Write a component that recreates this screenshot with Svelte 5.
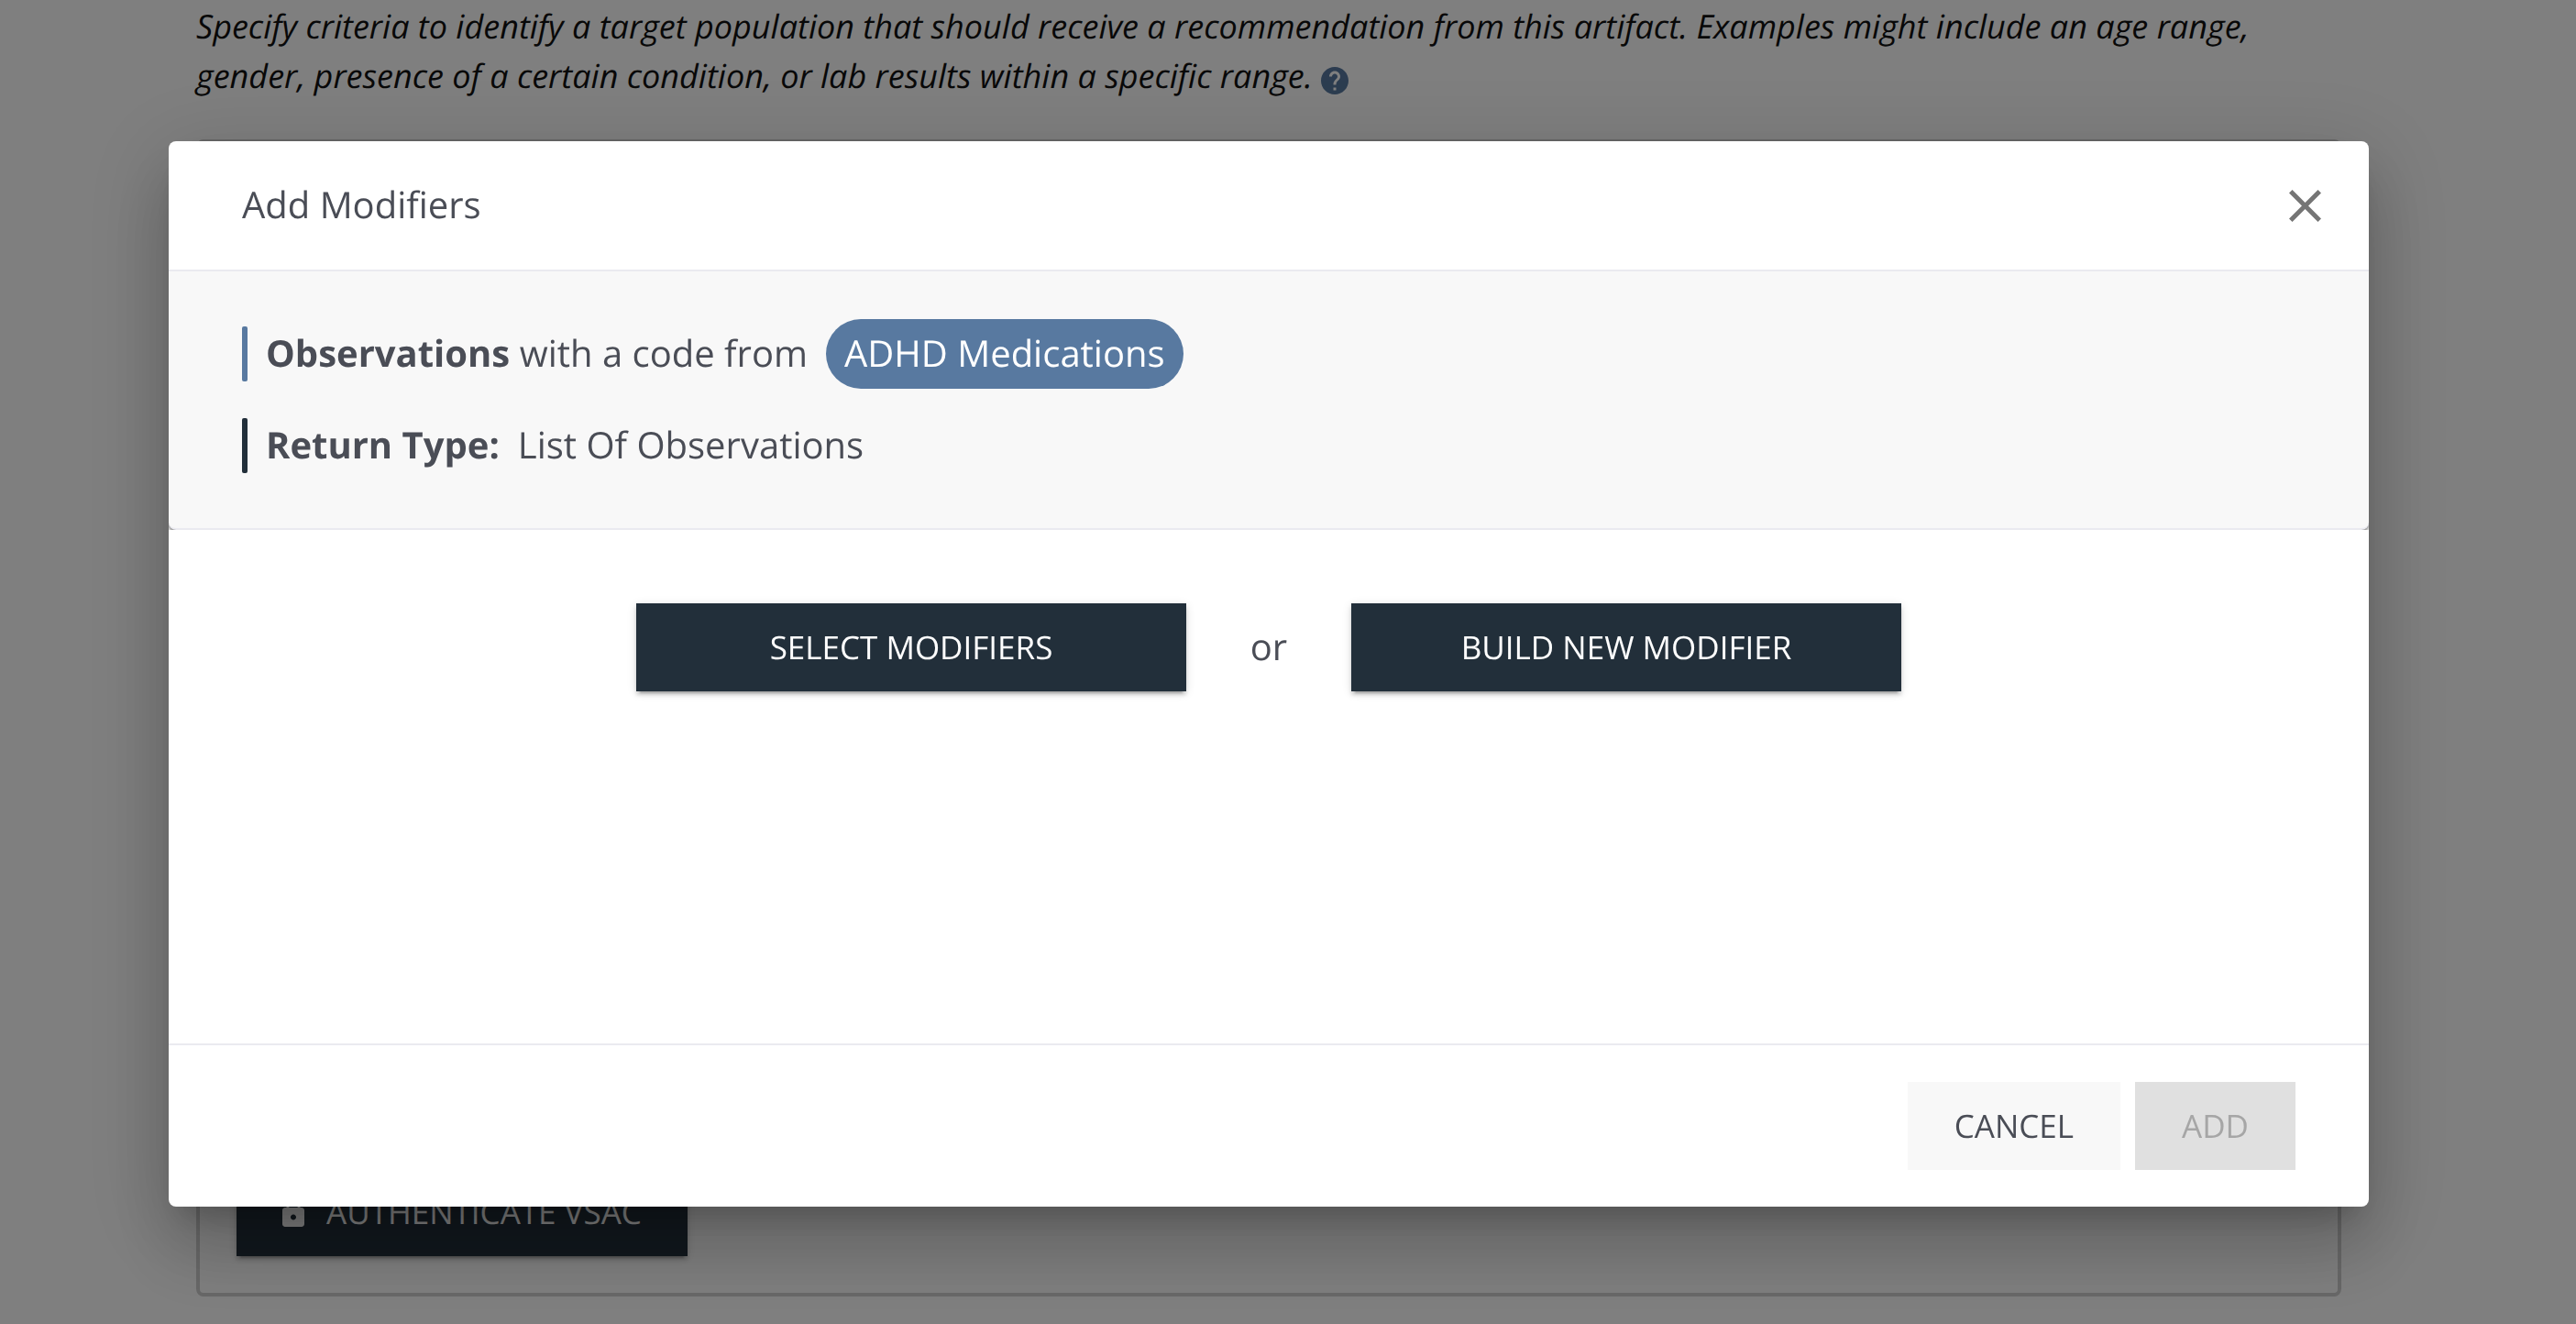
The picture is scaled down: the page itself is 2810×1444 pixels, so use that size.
<script>
  let open = $state(true);
  const close = () => (open = false);
</script>

<div class="page">
  <p class="intro">
    Specify criteria to identify a target population that should receive a recommendation from this artifact. Examples might include an age range, gender, presence of a certain condition, or lab results within a specific range.
    <button class="help" aria-label="Help">
      <svg viewBox="2 2 20 20" aria-hidden="true"><path d="M12 2C6.48 2 2 6.48 2 12s4.48 10 10 10 10-4.48 10-10S17.52 2 12 2zm1 17h-2v-2h2v2zm2.07-7.75-.9.92C13.45 12.9 13 13.5 13 15h-2v-.5c0-1.1.45-2.1 1.17-2.83l1.24-1.26c.37-.36.59-.86.59-1.41 0-1.1-.9-2-2-2s-2 .9-2 2H8c0-2.21 1.79-4 4-4s4 1.79 4 4c0 .88-.36 1.68-.93 2.25z" /></svg>
    </button>
  </p>
  <section class="group">
    <button class="btn primary auth">
      <svg viewBox="0 0 24 24" aria-hidden="true"><path d="M18 8h-1V6c0-2.76-2.24-5-5-5S7 3.24 7 6v2H6c-1.100 0-2 .9-2 2v10c0 1.100.9 2 2 2h12c1.100 0 2-.9 2-2V10c0-1.100-.9-2-2-2zm-6 9c-1.100 0-2-.9-2-2s.9-2 2-2 2 .9 2 2-.9 2-2 2zm3.100-9H8.900V6c0-1.710 1.390-3.100 3.100-3.100s3.100 1.390 3.100 3.100v2z" /></svg>
      AUTHENTICATE VSAC
    </button>
  </section>
</div>

{#if open}
  <div class="overlay">
    <div class="dialog" role="dialog" aria-modal="true" aria-labelledby="dialog-title">
      <header>
        <h2 id="dialog-title">Add Modifiers</h2>
        <button class="close" aria-label="Close" onclick={close}>
          <svg viewBox="5 5 14 14" aria-hidden="true"><path d="M19 6.410 17.590 5 12 10.590 6.410 5 5 6.410 10.590 12 5 17.590 6.410 19 12 13.410 17.590 19 19 17.590 13.410 12z" /></svg>
        </button>
      </header>
      <div class="summary">
        <div class="line blue">
          <span><strong>Observations</strong> with a code from</span>
          <span class="pill">ADHD Medications</span>
        </div>
        <div class="line">
          <strong>Return Type:</strong>
          <span>List Of Observations</span>
        </div>
      </div>
      <div class="choices">
        <button class="btn primary wide">SELECT MODIFIERS</button>
        <span>or</span>
        <button class="btn primary wide">BUILD NEW MODIFIER</button>
      </div>
      <footer>
        <button class="btn light" onclick={close}>CANCEL</button>
        <button class="btn" disabled>ADD</button>
      </footer>
    </div>
  </div>
{/if}

<style>
  :global(body) {
    background: #fff;
    font-family: "Open Sans", "Noto Sans", sans-serif;
    text-rendering: geometricPrecision;
    overflow: hidden;
  }
  .page {
    box-sizing: border-box;
    height: 100vh;
    padding: 2px 256px 30px 214px;
    display: flex;
    flex-direction: column;
    gap: 42px;
  }
  .intro {
    margin: 0;
    font-size: 36px;
    line-height: 54px;
    font-style: italic;
    color: #111;
  }
  .help {
    border: 0;
    padding: 0;
    background: none;
    width: 30px;
    height: 30px;
    vertical-align: -7px;
  }
  .help svg {
    display: block;
    width: 30px;
    height: 30px;
    fill: #5879a0;
  }
  .group {
    flex: 1;
    display: flex;
    align-items: flex-end;
    padding: 40px;
    border: 4px solid #d0d0d0;
    border-radius: 8px;
  }
  .btn {
    border: 0;
    height: 96px;
    padding: 2px 51px 0;
    font-family: inherit;
    font-size: 35px;
    line-height: 54px;
    color: #4a4d56;
    background: #e0e0e0;
    text-rendering: inherit;
  }
  .btn:disabled {
    color: #a6a6a6;
  }
  .light {
    background: #f8f8f8;
  }
  .primary {
    color: #fff;
    background: #222f3a;
    box-shadow: 0 6px 2px -4px rgba(0, 0, 0, 0.2), 0 4px 4px 0 rgba(0, 0, 0, 0.14), 0 2px 10px 0 rgba(0, 0, 0, 0.12);
  }
  .auth {
    display: flex;
    align-items: center;
    gap: 18px;
    padding: 2px 50px 0 44px;
  }
  .auth svg {
    width: 36px;
    height: 36px;
    fill: currentColor;
  }
  .overlay {
    position: fixed;
    inset: 0;
    box-sizing: border-box;
    padding: 154px 226px 128px 184px;
    background: rgba(0, 0, 0, 0.5);
    display: flex;
  }
  .dialog {
    flex: 1;
    display: flex;
    flex-direction: column;
    background: #fff;
    border-radius: 8px;
    color: #4a4d56;
    font-size: 40px;
    line-height: 58px;
    box-shadow: 0 22px 30px -14px rgba(0, 0, 0, 0.2), 0 48px 76px 6px rgba(0, 0, 0, 0.14), 0 18px 92px 16px rgba(0, 0, 0, 0.12);
  }
  header {
    display: flex;
    align-items: center;
    justify-content: space-between;
    padding: 40px 52px 40px 80px;
    border-bottom: 2px solid #eaeaf0;
  }
  h2 {
    margin: 0;
    padding-bottom: 2px;
    font: inherit;
  }
  .close {
    border: 0;
    padding: 0;
    background: none;
  }
  .close svg {
    display: block;
    width: 35px;
    height: 35px;
    fill: #757575;
  }
  .summary {
    display: flex;
    flex-direction: column;
    gap: 40px;
    padding: 60px 80px;
    background: #f8f8f8;
    border-bottom: 2px solid #eaeaf0;
    border-radius: 0 0 8px 8px;
    box-shadow: 0 2px 4px rgba(0, 0, 0, 0.6);
    clip-path: inset(0);
  }
  .line {
    display: flex;
    align-items: center;
    gap: 20px;
    height: 60px;
  }
  .line::before {
    content: "";
    width: 6px;
    height: 60px;
    border-radius: 2px;
    background: #222f3a;
  }
  .blue::before {
    background: #5879a0;
  }
  .line > * {
    padding-bottom: 2px;
  }
  .line .pill {
    padding: 8px 20px 10px;
    border-radius: 38px;
    color: #fff;
    background: #5879a0;
  }
  .choices {
    flex: 1;
    display: flex;
    justify-content: center;
    align-items: flex-start;
    padding: 80px;
  }
  .choices span {
    width: 180px;
    line-height: 94px;
    text-align: center;
  }
  .wide {
    width: 600px;
  }
  footer {
    display: flex;
    justify-content: flex-end;
    gap: 16px;
    padding: 40px 80px;
    border-top: 2px solid #eaeaf0;
  }
</style>
